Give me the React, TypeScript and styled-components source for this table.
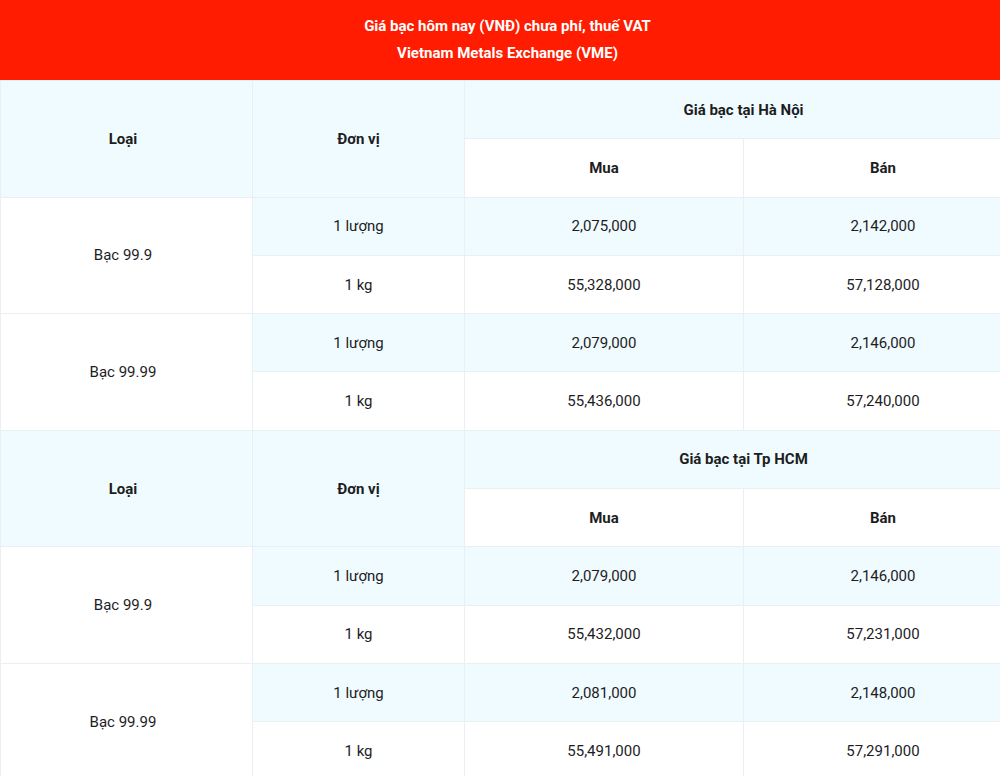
import React from "react";
import styled, { createGlobalStyle } from "styled-components";

const Global = createGlobalStyle`
  html, body { margin: 0; padding: 0; background: #ffffff; overflow-x: hidden; }
  body { font-family: Roboto, "Noto Sans", Arial, sans-serif; color: #1b1b1b; }
`;

const Page = styled.div`
  width: 1022px;
`;

const Banner = styled.div`
  background: #ff1c00;
  color: #ffffff;
  height: 80px;
  box-sizing: border-box;
  padding: 13px 7px 0 0;
  text-align: center;
  font-weight: 700;
  font-size: 15px;
  line-height: 27px;
`;

const Table = styled.table`
  width: 1022px;
  border-collapse: collapse;
  table-layout: fixed;
`;

const Col = styled.col<{ $w: number }>`
  width: ${(p) => p.$w}px;
`;

const Row = styled.tr`
  height: 58.3px;
`;

const Cell = styled.td<{ $tint?: boolean; $head?: boolean; $first?: boolean }>`
  border: 1px solid #eaeff2;
  background: ${(p) => (p.$tint ? "#effbfe" : "#ffffff")};
  text-align: center;
  vertical-align: middle;
  padding: ${(p) => (p.$first ? "0 7px 0 0" : "0")};
  font-size: 15px;
  font-weight: ${(p) => (p.$head ? 700 : 400)};
  color: #1d1d1f;
`;

type Price = { unit: string; buy: string; sell: string };
type Group = { name: string; rows: Price[] };

const sections: { city: string; groups: Group[] }[] = [
  {
    city: "Giá bạc tại Hà Nội",
    groups: [
      {
        name: "Bạc 99.9",
        rows: [
          { unit: "1 lượng", buy: "2,075,000", sell: "2,142,000" },
          { unit: "1 kg", buy: "55,328,000", sell: "57,128,000" },
        ],
      },
      {
        name: "Bạc 99.99",
        rows: [
          { unit: "1 lượng", buy: "2,079,000", sell: "2,146,000" },
          { unit: "1 kg", buy: "55,436,000", sell: "57,240,000" },
        ],
      },
    ],
  },
  {
    city: "Giá bạc tại Tp HCM",
    groups: [
      {
        name: "Bạc 99.9",
        rows: [
          { unit: "1 lượng", buy: "2,079,000", sell: "2,146,000" },
          { unit: "1 kg", buy: "55,432,000", sell: "57,231,000" },
        ],
      },
      {
        name: "Bạc 99.99",
        rows: [
          { unit: "1 lượng", buy: "2,081,000", sell: "2,148,000" },
          { unit: "1 kg", buy: "55,491,000", sell: "57,291,000" },
        ],
      },
    ],
  },
];

export default function App() {
  return (
    <Page>
      <Global />
      <Banner>
        <div>Giá bạc hôm nay (VNĐ) chưa phí, thuế VAT</div>
        <div>Vietnam Metals Exchange (VME)</div>
      </Banner>
      <Table>
        <colgroup>
          <Col $w={252} />
          <Col $w={212} />
          <Col $w={279} />
          <Col $w={279} />
        </colgroup>
        <tbody>
          {sections.map((s) => (
            <React.Fragment key={s.city}>
              <Row>
                <Cell $tint $head $first rowSpan={2}>Loại</Cell>
                <Cell $tint $head rowSpan={2}>Đơn vị</Cell>
                <Cell $tint $head colSpan={2}>{s.city}</Cell>
              </Row>
              <Row>
                <Cell $head>Mua</Cell>
                <Cell $head>Bán</Cell>
              </Row>
              {s.groups.map((g) =>
                g.rows.map((r, i) => (
                  <Row key={g.name + r.unit}>
                    {i === 0 && <Cell $first rowSpan={2}>{g.name}</Cell>}
                    <Cell $tint={i === 0}>{r.unit}</Cell>
                    <Cell $tint={i === 0}>{r.buy}</Cell>
                    <Cell $tint={i === 0}>{r.sell}</Cell>
                  </Row>
                ))
              )}
            </React.Fragment>
          ))}
        </tbody>
      </Table>
    </Page>
  );
}
